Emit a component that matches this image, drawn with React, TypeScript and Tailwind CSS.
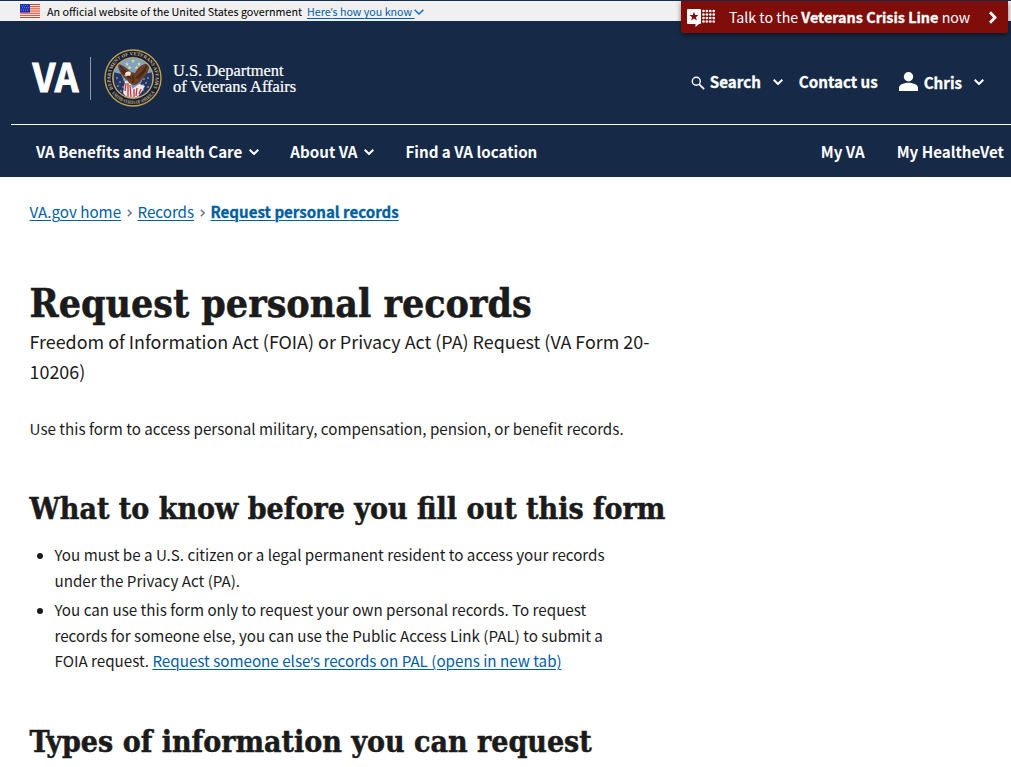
import type { ReactNode } from "react";

function Chevron({ className = "" }: { className?: string }) {
  return (
    <svg viewBox="0 0 10 6" fill="none" stroke="currentColor" strokeWidth="2" className={`mt-0.5 h-[6px] w-[10px] shrink-0 ${className}`}>
      <path d="M0.7 0.7 5 5 9.3 0.7" />
    </svg>
  );
}

function Apostrophe() {
  return <span className="font-['Open_Sans',sans-serif] leading-none">’</span>;
}

function Flag() {
  const stripes = [0, 2, 4, 6, 8, 10, 12];
  return (
    <svg viewBox="0 0 20 13" className="h-[14px] w-5 shrink-0" preserveAspectRatio="none">
      <rect width="20" height="13" fill="#fff" />
      {stripes.map((y) => (
        <rect key={y} y={y} width="20" height="1" fill="#db3e1f" />
      ))}
      <rect width="10" height="8" fill="#1e33b1" />
      {[1.5, 3.5, 5.5].map((y, r) =>
        [1.5, 3.5, 5.5, 7.5].map((x) => <circle key={`${x}-${y}`} cx={x + (r % 2)} cy={y} r="0.45" fill="#cfd6f5" />)
      )}
    </svg>
  );
}

function CrisisIcon() {
  const steps = [0, 1, 2, 3];
  return (
    <svg viewBox="0 0 28 18" fill="#fff" className="mt-px h-[18px] w-7 shrink-0">
      <path d="M1 0h12a1 1 0 0 1 1 1v13a1 1 0 0 1-1 1h-1l-3.500 3v-3H1a1 1 0 0 1-1-1V1a1 1 0 0 1 1-1z" />
      <path fill="#7f0e0a" d="M7 2.800 8.200 6 11.500 6.100 8.900 8.200 9.900 11.500 7 9.600 4.100 11.500 5.100 8.200 2.500 6.100 5.800 6z" />
      {steps.map((r) => steps.map((c) => <circle key={`${r}${c}`} cx={16.500 + c * 3.400} cy={2 + r * 3.500} r="1.350" />))}
    </svg>
  );
}

function Seal() {
  const stars = [[-6, -14], [0, -17], [6, -14], [-3.5, -10.5], [3.5, -10.5]];
  return (
    <svg viewBox="-29 -29 58 58" className="h-[58px] w-[58px] shrink-0">
      <defs>
        <clipPath id="disc"><circle r="19.500" /></clipPath>
        <path id="upper" d="M-18.800 12.500A22.600 22.600 0 1 1 18.800 12.500" />
        <path id="lower" d="M-22 14A26.100 26.100 0 0 0 22 14" />
      </defs>
      <circle r="28.700" fill="#c2a14f" />
      <circle r="27.300" fill="#171f38" />
      <circle r="20.900" fill="#c9ab5c" />
      <circle r="19.500" fill="#6c93bd" />
      <g clipPath="url(#disc)">
        <path d="M-21-21H21V-6L0-1-21-6z" fill="#7ea3c9" />
        <path d="M-20-6-12-4-4 14-6 20-18 17z" fill="#26355f" />
        <path d="M20-6 12-4 5 12 7 20 18 17z" fill="#26355f" />
        <g fill="#dfe5ee">
          {[[-16, 0], [-13, 4], [-15, 8], [-10, 9], [-12, 13], [-9, 2], [15, 0], [13, 5], [15, 9], [10, 7], [11, 1], [10, 12]].map(([x, y]) => (
            <circle key={`${x},${y}`} cx={x} cy={y} r="0.7" />
          ))}
        </g>
        <path d="M-8 3-3 2 1 18-5 21-10 15z" fill="#f0e5e2" />
        <path d="M6 6 12 8 8 15 2 20-2 19-1 11z" fill="#f0e5e2" />
        <g stroke="#b63a45" strokeWidth="1.300" fill="none">
          <path d="M-7 5-8 13M-5 5-5 19M-3 7-2 19M1 11 1 19M4 10 3 18M8 11 6 16" />
        </g>
        <g fill="#f7dc62">
          {stars.map(([x, y]) => (
            <path key={`${x},${y}`} transform={`translate(${x} ${y})`} d="M0-2 .6-.6 2-.6 .9.300 1.300 1.800 0 .9-1.300 1.800-.9.300-2-.6-.6-.6z" />
          ))}
        </g>
        <path d="M-15-14C-10-13-6-10-2-6L2-5C5-11 9-14 16-15 17-8 14-3 9 1 7 4 4 7 1 7-3 7-5 3-8 0-12-4-15-8-15-14z" fill="#6b3d25" />
        <path d="M-13-12C-9-8-5-5-2 1M-12-8-4 0M14-13C12-7 7-4 3 0M13-8 5 1M0-3V5" stroke="#3b2018" strokeWidth="1.100" fill="none" />
        <path d="M-8-4C-7-7-3-7-2-5L-3-2-5-2.500-7-1.500z" fill="#f4ead6" />
        <path d="M-9-3-6-4-7.500-1.500z" fill="#e5b33c" />
      </g>
      <g fill="#cbb87f" fontSize="5" fontWeight="700" fontFamily="'Liberation Serif', serif">
        <text><textPath href="#upper" textLength="92" startOffset="2" lengthAdjust="spacingAndGlyphs">DEPARTMENT OF VETERANS AFFAIRS</textPath></text>
        <text><textPath href="#lower" textLength="50" startOffset="1.500" lengthAdjust="spacingAndGlyphs">UNITED STATES OF AMERICA</textPath></text>
      </g>
    </svg>
  );
}

function Crumb({ children, className = "" }: { children: ReactNode; className?: string }) {
  return <a href="#" className={`text-[#005ea2] underline decoration-1 underline-offset-2 ${className}`}>{children}</a>;
}

function CrumbSeparator() {
  return (
    <svg viewBox="0 0 5 8" fill="none" stroke="#71767a" strokeWidth="1.500" className="mt-[3px] h-2 w-[5px] shrink-0">
      <path d="M.8.700 4.100 4 .8 7.300" />
    </svg>
  );
}

const heading = "font-['DejaVu_Serif_Condensed',serif] font-bold [-webkit-text-stroke:0.5px_#1b1b1b]";
const bullet = "relative before:absolute before:top-[11px] before:-left-[18px] before:h-1.5 before:w-1.5 before:rounded-full before:bg-[#1b1b1b]";

export default function App() {
  return (
    <div className="relative h-[767px] w-full overflow-hidden bg-white font-['Noto_Sans_CJK_SC',sans-serif] text-[15.18px] text-[#1b1b1b]">
      <div className="flex h-[21px] items-center border-t border-[#162e51] bg-[#f0f0f0] pl-5 text-[10.75px] leading-5 text-black">
        <Flag />
        <span className="mt-[2px] ml-[7px] h-5 whitespace-pre">An official website of the United States government</span>
        <a href="#" className="mt-[2px] ml-[5px] flex h-5 items-center text-[#005ea2]">
          <span className="whitespace-pre text-[10.7px] underline decoration-1 underline-offset-2">Here<Apostrophe />s how you know </span>
          <svg viewBox="0 0 10 6" fill="none" stroke="#1a75bd" strokeWidth="1.600" className="h-[6px] w-[10px]">
            <path d="M0.600 0.700 5 5 9.400 0.700" />
          </svg>
        </a>
      </div>

      <a href="#" className="absolute top-px left-[681px] flex h-8 w-[327px] items-center rounded-b-[3px] bg-[#7f0e0a] pl-1.5 text-[14.2px] text-white shadow-[0_2px_5px_rgba(0,0,0,0.5)]">
        <CrisisIcon />
        <span className="ml-3.5 whitespace-pre">Talk to the <b className="text-[14.4px] font-bold [-webkit-text-stroke:0.3px_white]">Veterans Crisis Line</b> now</span>
        <svg viewBox="0 0 8 13" fill="none" stroke="currentColor" strokeWidth="2.800" className="absolute top-[10px] left-[308px] h-[13px] w-2">
          <path d="M1 1.200 6 6.500 1 11.800" />
        </svg>
      </a>

      <header className="bg-[#162a47] text-[15.15px] font-bold text-white">
        <div className="flex h-[103px] pl-8">
          <a href="#" className="mt-7 flex h-[58px] items-center">
            <svg viewBox="0 0 47 40" className="h-10 w-[47px] overflow-visible">
              <text x="0.500" y="34" fontSize="39" fontWeight="700" textLength="46" lengthAdjust="spacingAndGlyphs" fill="#fff" stroke="#fff" strokeWidth="1">VA</text>
            </svg>
            <span className="ml-[11px] h-[43px] w-px bg-[#8f9aab]" />
            <span className="ml-[13px]"><Seal /></span>
            <span className="mt-0.5 ml-[11px] flex flex-col font-['Liberation_Serif',serif] text-[16.4px] leading-4 font-normal whitespace-nowrap [-webkit-text-stroke:0.2px_white]">
              <span>U.S. Department</span>
              <span>of Veterans Affairs</span>
            </span>
          </a>
          <div className="mt-[48px] ml-auto flex h-6 items-center pr-[27px] leading-6">
            <svg viewBox="0 0 14 14" fill="none" stroke="currentColor" strokeWidth="1.400" className="mt-[4px] h-3.5 w-3.5">
              <circle cx="5.300" cy="5.300" r="4" />
              <path d="m8.300 8.300 4.800 4.800" strokeWidth="1.700" />
            </svg>
            <span className="ml-[5px] [-webkit-text-stroke:0.3px_white]">Search</span>
            <Chevron className="ml-3" />
            <span className="ml-4 [-webkit-text-stroke:0.3px_white]">Contact us</span>
            <svg viewBox="0 0 19 19" fill="currentColor" className="ml-[21px] h-[19px] w-[19px]">
              <circle cx="9.500" cy="4.800" r="4.700" />
              <path d="M0 19v-3.300C0 12.300 6 10.800 9.500 10.800S19 12.300 19 15.700V19z" />
            </svg>
            <span className="mt-0.5 ml-1.5 [-webkit-text-stroke:0.3px_white]">Chris</span>
            <Chevron className="ml-3" />
          </div>
        </div>
        <nav className="ml-[11px] flex h-[53px] items-center border-t border-white pr-[7px] pl-[25px] leading-6 whitespace-nowrap">
          <span>VA Benefits and Health Care</span>
          <Chevron className="ml-[7px]" />
          <span className="ml-[31px]">About VA</span>
          <Chevron className="ml-[6px]" />
          <span className="ml-8">Find a VA location</span>
          <span className="ml-auto">My VA</span>
          <span className="ml-8">My HealtheVet</span>
        </nav>
      </header>

      <main className="px-[29.5px] pt-[21px]">
        <div className="flex h-[26px] items-center gap-[5.7px] leading-[26px]">
          <Crumb>VA.gov home</Crumb>
          <CrumbSeparator />
          <Crumb>Records</Crumb>
          <CrumbSeparator />
          <Crumb className="text-[15.1px] font-bold [-webkit-text-stroke:0.3px_#005ea2]">Request personal records</Crumb>
        </div>

        <h1 className={`mt-14 text-[38.98px] leading-[46px] ${heading}`}>Request personal records</h1>
        <p className="w-[640px] text-[17.91px] leading-[30px]">
          Freedom of Information Act (FOIA) or Privacy Act (PA) Request (VA Form 20-<br />10206)
        </p>
        <p className="mt-[29px] leading-[26px]">Use this form to access personal military, compensation, pension, or benefit records.</p>

        <h2 className={`mt-12 text-[30.03px] leading-10 ${heading}`}>What to know before you fill out this form</h2>
        <ul className="mt-[13px] flex flex-col gap-1 pl-[25px] leading-[25.5px]">
          <li className={bullet}>
            You must be a U.S. citizen or a legal permanent resident to access your records<br />under the Privacy Act (PA).
          </li>
          <li className={bullet}>
            You can use this form only to request your own personal records. To request<br />
            records for someone else, you can use the Public Access Link (PAL) to submit a<br />
            FOIA request. <Crumb>Request someone else<Apostrophe />s records on PAL (opens in new tab)</Crumb>
          </li>
        </ul>
        <h2 className={`mt-12 text-[30.03px] leading-10 ${heading}`}>Types of information you can request</h2>
      </main>
    </div>
  );
}
